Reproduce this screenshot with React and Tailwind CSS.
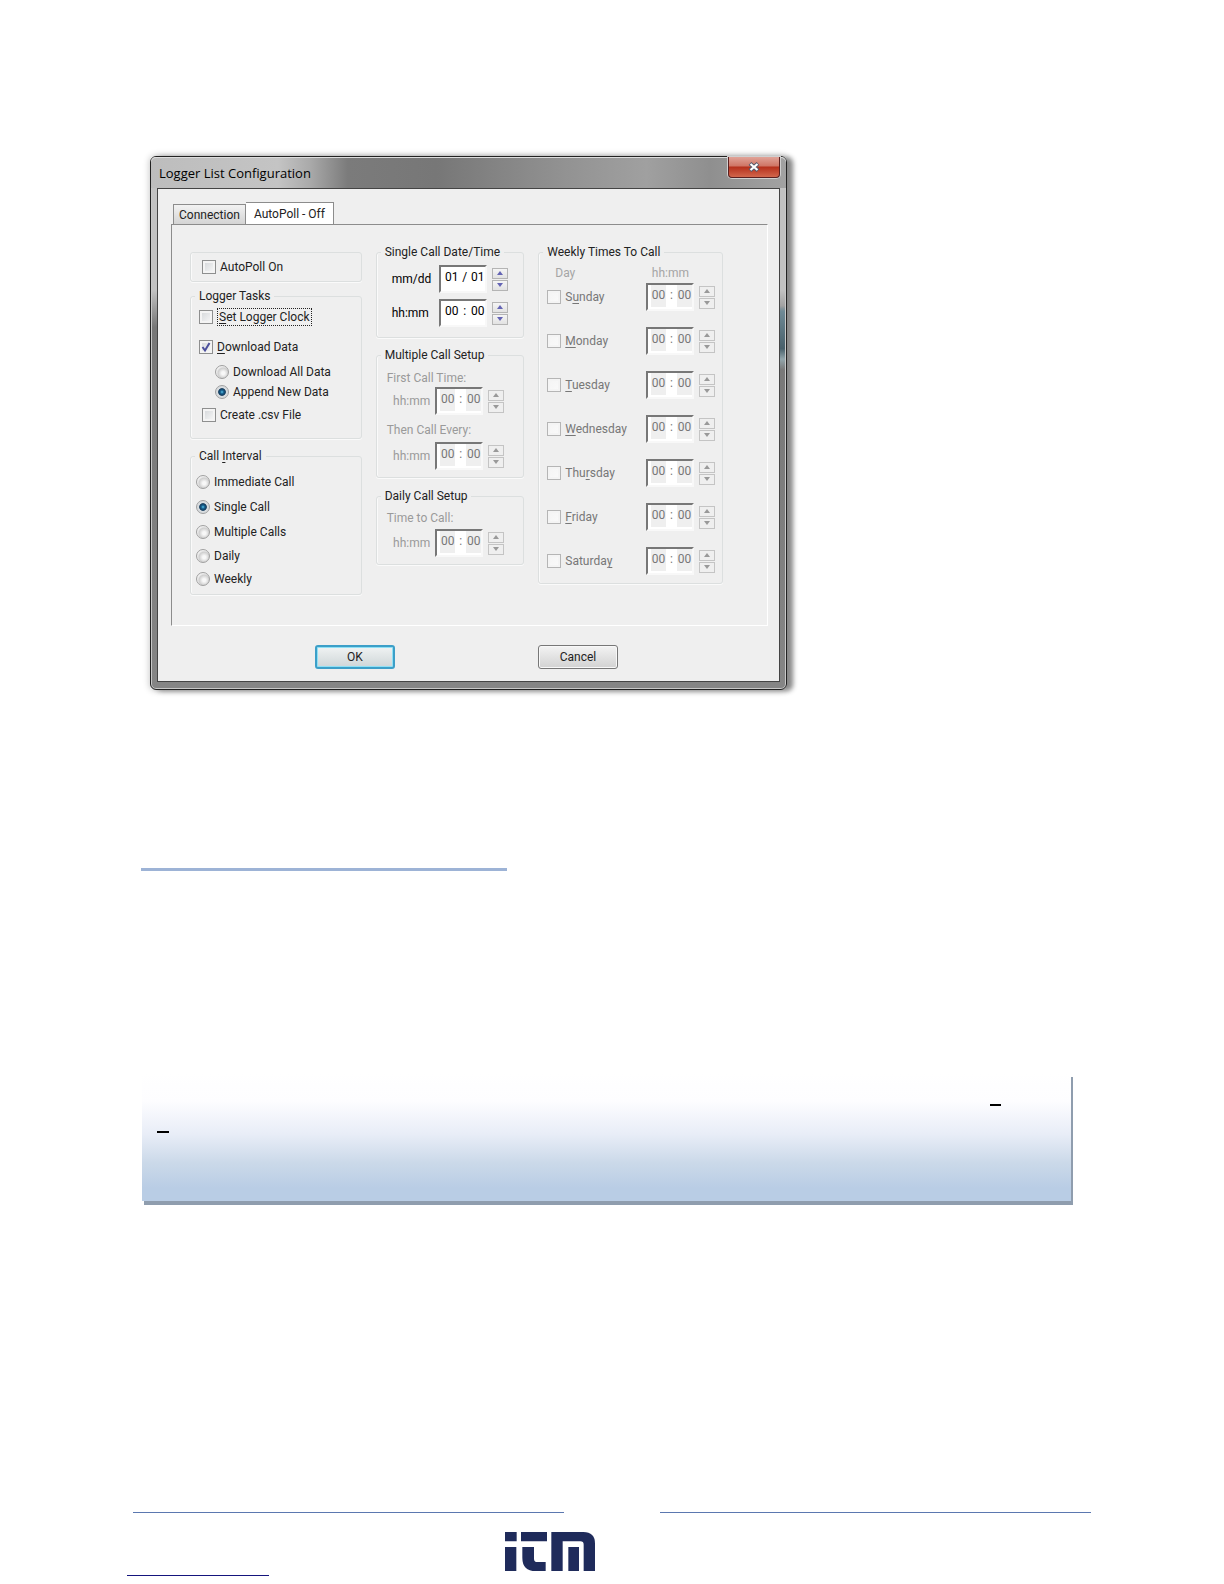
import { useState } from 'react';
import clsx from 'clsx';

const callTypes = ['Immediate Call', 'Single Call', 'Multiple Calls'];
const repeatTypes = ['Daily', 'Weekly'];

// key = index of the underlined letter
const weekDays = [
  { name: 'Sunday', key: 1 },
  { name: 'Monday', key: 0 },
  { name: 'Tuesday', key: 0 },
  { name: 'Wednesday', key: 0 },
  { name: 'Thursday', key: 3 },
  { name: 'Friday', key: 0 },
  { name: 'Saturday', key: 7 },
];

const Mnemonic = ({ text, at }) => (
  <span>
    {text.slice(0, at)}
    <span className="underline underline-offset-2">{text[at]}</span>
    {text.slice(at + 1)}
  </span>
);

const Group = ({ title, className, bodyClass, children }) => (
  <fieldset
    className={clsx(
      'min-w-0 rounded-[3px] border border-[#dcdfdf] shadow-[inset_1px_0_0_#fafafa,0_1px_0_#fafafa]',
      className
    )}
  >
    {title && <legend className="ml-1 px-1 leading-4">{title}</legend>}
    <div className={bodyClass}>{children}</div>
  </fieldset>
);

const CheckBox = ({ children, className, ...rest }) => (
  <label className={clsx('flex h-[18px] items-center gap-1', className)}>
    <span className="grid shrink-0">
      <input
        type="checkbox"
        className="peer col-start-1 row-start-1 size-[14px] appearance-none border border-[#8e8f8f] bg-linear-to-br from-[#d2d5d8] to-[#fafafa] shadow-[inset_0_0_0_2px_#f4f4f4] disabled:border-[#b5b5b5] disabled:from-[#f4f4f4]"
        {...rest}
      />
      <svg
        viewBox="0 0 14 14"
        className="pointer-events-none col-start-1 row-start-1 hidden size-[14px] peer-checked:block"
      >
        <path
          d="M3.5 7 L6 10.5 L10.5 3"
          fill="none"
          stroke="#4b4f9c"
          strokeWidth="2"
        />
      </svg>
    </span>
    {children}
  </label>
);

const Radio = ({ label, name, checked, onChange, className }) => (
  <label className={clsx('flex h-[18px] items-center gap-1', className)}>
    <input
      type="radio"
      name={name}
      checked={checked}
      onChange={onChange}
      className="size-[14px] shrink-0 appearance-none rounded-full border border-[#a0a0a0] bg-[radial-gradient(circle_at_60%_60%,#f8f8f8_15%,#cfcfcf_50%,#eeeeee_65%)] checked:bg-[radial-gradient(circle_at_50%_50%,#5cc3e8_0%,#17618f_20%,#123a5c_40%,#d8dcdf_50%)]"
    />
    {label}
  </label>
);

const SpinButton = ({ up, disabled, label }) => (
  <button
    type="button"
    aria-label={label}
    disabled={disabled}
    className="flex h-[11px] w-[16px] items-center justify-center border border-[#b4b4b4] bg-linear-to-b from-[#f5f5f5] to-[#e2e2e2] text-[#6464b4] disabled:border-[#c4c4c4] disabled:from-[#efefef] disabled:to-[#efefef] disabled:text-[#999]"
  >
    <svg viewBox="0 0 6 4" className="h-1 w-1.5" fill="currentColor">
      <path d={up ? 'M0 4 L3 0 L6 4Z' : 'M0 0 L3 4 L6 0Z'} />
    </svg>
  </button>
);

const PairField = ({ name, values = ['00', '00'], separator = ':', disabled }) => {
  const inputClass =
    'h-[22px] w-[15px] bg-white p-0 pb-[2px] text-center leading-5 text-black disabled:bg-[#efefef] disabled:text-[#777]';

  return (
    <div className="flex items-center gap-[5px]">
      <div className="flex h-[28px] w-[48px] items-start justify-between border-2 border-t-[#777] border-r-[#f8f8f8] border-b-[#f8f8f8] border-l-[#777] bg-white pl-[3px] leading-5">
        <input
          aria-label={`${name} first`}
          defaultValue={values[0]}
          disabled={disabled}
          className={inputClass}
        />
        <span className={disabled ? 'text-[#777]' : 'text-black'}>
          {separator}
        </span>
        <input
          aria-label={`${name} second`}
          defaultValue={values[1]}
          disabled={disabled}
          className={inputClass}
        />
      </div>
      <div className="flex flex-col gap-px">
        <SpinButton up disabled={disabled} label={`${name} up`} />
        <SpinButton disabled={disabled} label={`${name} down`} />
      </div>
    </div>
  );
};

const DisabledTime = ({ name }) => (
  <div className="flex items-center justify-end gap-[5px] pr-[19px] text-[#9a9a9a]">
    <span>hh:mm</span>
    <PairField name={name} disabled />
  </div>
);

const LoggerDialog = () => {
  const [callInterval, setCallInterval] = useState('Single Call');
  const [download, setDownload] = useState('append');

  const intervalRadio = (label) => (
    <Radio
      key={label}
      name="interval"
      label={label}
      checked={callInterval === label}
      onChange={() => setCallInterval(label)}
    />
  );

  return (
    <section className="ml-[9px] w-full max-w-[637px] rounded-[6px] border border-[#222] [background:linear-gradient(transparent_28%,#6f8a96_29%,#48606b_36%,#93a6ac_38%,transparent_40%)_right/7px_100%_no-repeat,linear-gradient(#c2c2c2_25%,#777_32%,#858585_100%)] px-[6px] pb-[7px] font-[Roboto,sans-serif] text-[12px] text-[#222] shadow-[inset_0_0_0_1px_#c8c8c8,6px_1px_5px_0px_#888,0_0_6px_1px_#ccc]">
      <header className="-mx-[6px] flex h-[31px] items-start justify-between rounded-t-[5px] bg-[linear-gradient(90deg,#bdbdbd_0%,#c4c4c4_20%,#aaa_25%,#7b7b7b_31%,#777_45%,#929292_65%,#a0a0a0_78%,#8f8f8f_88%,#a2a2a2_100%)] pr-[6px] pl-2 shadow-[inset_0_1px_0_#ddd]">
        <h1 className="pt-1 font-['Open_Sans',sans-serif] text-[13px] leading-6 text-black">
          Logger List Configuration
        </h1>
        <button
          type="button"
          aria-label="Close"
          className="flex h-[21px] w-[52px] items-center justify-center rounded-b-[4px] border border-t-0 border-[#5a2020] bg-[linear-gradient(#e0a398_0%,#cf7565_45%,#b5301c_50%,#d2664c_100%)] shadow-[0_0_0_1px_#d0d0d0]"
        >
          <svg viewBox="0 0 12 10" className="h-[10px] w-3">
            <path d="M2 1.5 L10 8.5 M10 1.5 L2 8.5" stroke="#555a6c" strokeWidth="4" />
            <path d="M2.5 2 L9.5 8 M9.5 2 L2.5 8" stroke="#fff" strokeWidth="2.2" />
          </svg>
        </button>
      </header>

      <div className="border border-[#444] bg-[#efefef] pt-[13px] pr-[11px] pb-[12px] pl-[13px]">
        <div role="tablist" className="flex items-end pl-[2px]">
          <button
            type="button"
            role="tab"
            className="h-[20px] border border-b-0 border-[#8c8c8c] bg-linear-to-b from-[#f2f2f2] to-[#d4d4d4] px-[5px] leading-5"
          >
            Connection
          </button>
          <button
            type="button"
            role="tab"
            aria-selected="true"
            className="h-[22px] border border-b-0 border-l-0 border-[#8c8c8c] bg-white px-2 leading-5"
          >
            AutoPoll - Off
          </button>
        </div>

        <div className="grid grid-cols-[171fr_148fr_184fr] items-start gap-[14px] border border-[#8c8c8c] border-r-white border-b-white pt-[19px] pr-[44px] pb-[30px] pl-[18px]">
          <div className="pt-2">
            <Group bodyClass="px-[11px] py-[5px]">
              <CheckBox>AutoPoll On</CheckBox>
            </Group>

            <Group
              title="Logger Tasks"
              className="mt-[6px]"
              bodyClass="pt-1 pb-[14px] pl-2"
            >
              <CheckBox>
                <span className="border border-dotted border-[#222] px-px leading-4">
                  <Mnemonic text="Set Logger Clock" at={0} />
                </span>
              </CheckBox>
              <CheckBox defaultChecked className="mt-3">
                <Mnemonic text="Download Data" at={0} />
              </CheckBox>
              <Radio
                name="download"
                label="Download All Data"
                checked={download === 'all'}
                onChange={() => setDownload('all')}
                className="mt-[7px] pl-4"
              />
              <Radio
                name="download"
                label="Append New Data"
                checked={download === 'append'}
                onChange={() => setDownload('append')}
                className="mt-[2px] pl-4"
              />
              <CheckBox className="mt-[5px] pl-[3px]">Create .csv File</CheckBox>
            </Group>

            <Group
              title={<Mnemonic text="Call Interval" at={5} />}
              className="mt-[9px]"
              bodyClass="pt-[9px] pb-[6px] pl-[5px]"
            >
              <div className="flex flex-col gap-[7px]">
                {callTypes.map(intervalRadio)}
              </div>
              <div className="mt-[6px] flex flex-col gap-[5px]">
                {repeatTypes.map(intervalRadio)}
              </div>
            </Group>
          </div>

          <div>
            <Group title="Single Call Date/Time" bodyClass="pt-[5px] pb-[10px]">
              <div className="flex flex-col gap-[6px] px-[15px] text-black">
                <div className="flex items-center justify-between">
                  <span>mm/dd</span>
                  <PairField name="Date" values={['01', '01']} separator="/" />
                </div>
                <div className="flex items-center justify-between">
                  <span>hh:mm</span>
                  <PairField name="Time" />
                </div>
              </div>
            </Group>

            <Group
              title="Multiple Call Setup"
              className="mt-[9px]"
              bodyClass="pt-[7px] pb-[7px]"
            >
              <p className="mb-px pl-[10px] leading-4 text-[#9a9a9a]">
                First Call Time:
              </p>
              <DisabledTime name="First call" />
              <p className="mt-[7px] mb-1 pl-[10px] leading-4 text-[#9a9a9a]">
                Then Call Every:
              </p>
              <DisabledTime name="Call every" />
            </Group>

            <Group
              title="Daily Call Setup"
              className="mt-[10px]"
              bodyClass="pt-[6px] pb-[7px]"
            >
              <p className="mb-[3px] pl-[10px] leading-4 text-[#9a9a9a]">
                Time to Call:
              </p>
              <DisabledTime name="Daily call" />
            </Group>
          </div>

          <Group
            title="Weekly Times To Call"
            bodyClass="pt-[5px] pr-[7px] pb-2 pl-2"
          >
            <div className="mb-[2px] flex justify-between pr-[26px] pl-2 leading-4 text-[#a5a5a5]">
              <span>Day</span>
              <span>hh:mm</span>
            </div>
            <div className="flex flex-col gap-4">
              {weekDays.map((day) => (
                <div key={day.name} className="flex items-center justify-between">
                  <CheckBox disabled className="text-[#777]">
                    <Mnemonic text={day.name} at={day.key} />
                  </CheckBox>
                  <PairField name={day.name} disabled />
                </div>
              ))}
            </div>
          </Group>
        </div>

        <div className="mt-[19px] flex justify-center gap-[143px] pr-[6px]">
          <button
            type="button"
            className="h-6 w-20 rounded-[3px] border-2 border-[#3c9fc8] bg-linear-to-b from-[#f0f3f3] to-[#cfd6d8] shadow-[inset_0_0_0_1px_#8fe0f5]"
          >
            OK
          </button>
          <button
            type="button"
            className="h-6 w-20 rounded-[3px] border border-[#777] bg-linear-to-b from-[#f3f3f3] to-[#d2d2d2] shadow-[inset_0_0_0_1px_#f8f8f8]"
          >
            Cancel
          </button>
        </div>
      </div>
    </section>
  );
};

const ItmLogo = () => (
  <svg
    viewBox="0 0 270 117"
    className="h-[39px] w-[90px]"
    fill="#1f2b5b"
    role="img"
    aria-label="ITM"
  >
    <path d="M0 0H35V28H0Z M0 45H34V117H0Z" />
    <path d="M48 0H126V28H48Z M52 45H87V80Q87 90 97 90H122V117H92Q52 117 52 77Z" />
    <path d="M139 117V0H235Q270 0 270 35V117H236V38Q236 28 226 28H173V117Z M190 45H222V117H190Z" />
  </svg>
);

const App = () => (
  <div className="flex min-h-screen flex-col bg-white">
    <main className="pt-[156px] pr-[153px] pl-[141px]">
      <LoggerDialog />

      <hr className="mt-[178px] w-full max-w-[366px] border-t-[3px] border-[#9db3d6]" />

      <aside className="mt-[202px] ml-px flex h-[128px] flex-col bg-[linear-gradient(#fff_0%,#fdfdff_22%,#e8edf7_48%,#cbd9e9_70%,#b9cde5_90%)] px-[15px] pt-[31px] shadow-[2px_4px_0_#8f9dae]">
        <hr className="mr-[55px] w-[11px] self-end border-t-2 border-black" />
        <hr className="mt-[25px] w-3 border-t-2 border-black" />
      </aside>
    </main>

    <footer className="mt-[311px]">
      <div className="flex gap-24 px-[133px]">
        <hr className="flex-1 border-[#5b78b0]" />
        <hr className="flex-1 border-[#5b78b0]" />
      </div>
      <div className="mt-[19px] flex items-end pb-2 pl-[127px]">
        <hr className="w-[142px] border-[#15157d]" />
        <div className="mb-[5px] ml-[236px]">
          <ItmLogo />
        </div>
      </div>
    </footer>
  </div>
);

export default App;
